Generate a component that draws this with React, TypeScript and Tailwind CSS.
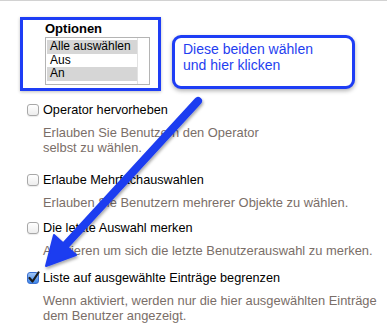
import React from "react";

const Check = ({ checked }: { checked?: boolean }) =>
  checked ? (
    <div className="relative w-[12px] h-[12px] shrink-0 rounded-[3px] border border-[#3b6fd0] bg-gradient-to-b from-[#9ec4f5] to-[#3d86e8]">
      <svg viewBox="0 0 13 13" className="absolute -left-px -top-[2px] w-[13px] h-[13px]">
        <path d="M2.5 7 L5.5 10.5 L11.5 1.5" fill="none" stroke="#1a1a1a" strokeWidth="2.2" strokeLinecap="round" strokeLinejoin="round" />
      </svg>
    </div>
  ) : (
    <div className="w-[12px] h-[12px] shrink-0 rounded-[3px] border border-[#a8a8a8] bg-gradient-to-b from-white to-[#ededed] shadow-[0_1px_1px_rgba(0,0,0,0.08)]" />
  );

const Row = ({ label, desc, checked, top }: { label: string; desc: string[]; checked?: boolean; top: string }) => (
  <div className={`flex flex-col ${top}`}>
    <div className="flex items-center gap-[4px] h-[16px]">
      <Check checked={checked} />
      <span className="text-[12.7px] text-black leading-[16px]">{label}</span>
    </div>
    <div className="pl-[16px] pt-[8px] text-[12.9px] leading-[14.5px] text-[#7a6e68]">
      {desc.map((d, i) => (
        <div key={i}>{d}</div>
      ))}
    </div>
  </div>
);

export default function App() {
  return (
    <div className="relative w-[387px] h-[323px] bg-white overflow-hidden" style={{ fontFamily: '"Liberation Sans", Arial, sans-serif' }}>
      <div className="h-[1px] bg-[#d2d2d2]" />
      <div className="flex items-start pt-[16px] pl-[20px] gap-[11px]">
        <div className="w-[141px] h-[74px] border-[3px] border-[#1e3df5] bg-white shadow-[0_1px_3px_rgba(0,0,0,0.25)] pl-[22px] pt-[0px]">
          <div className="text-[13px] font-bold leading-[17px] text-black">Optionen</div>
          <div className="mt-[0px] w-[105px] h-[48px] border border-[#b4b4b4] flex">
            <div className="flex-1 pl-[1px] pt-[2px] text-[12px] leading-[13.5px] text-black">
              <div className="bg-[#d6d6d6] pl-[3px] h-[13.5px]">Alle auswählen</div>
              <div className="pl-[3px] h-[13.5px]">Aus</div>
              <div className="bg-[#d6d6d6] pl-[3px] h-[13.5px]">An</div>
            </div>
            <div className="w-[12px] border-l border-[#e2e2e2]" />
          </div>
        </div>
        <div className="mt-[18px] w-[183px] h-[54px] rounded-[9px] border-[3px] border-[#1e3df5] bg-white shadow-[0_2px_4px_rgba(0,0,0,0.3)] pl-[8px] pt-[3px] text-[14px] leading-[16px] text-[#1f3ef0]">
          <div>Diese beiden wählen</div>
          <div>und hier klicken</div>
        </div>
      </div>
      <div className="flex flex-col pl-[27px] pt-[11px]">
        <Row top="mt-0" label="Operator hervorheben" desc={["Erlauben Sie Benutzern den Operator", "selbst zu wählen."]} />
        <Row top="mt-[17px]" label="Erlaube Mehrfachauswahlen" desc={["Erlauben Sie Benutzern mehrerer Objekte zu wählen."]} />
        <Row top="mt-[9.5px]" label="Die letzte Auswahl merken" desc={["Aktivieren um sich die letzte Benutzerauswahl zu merken."]} />
        <Row top="mt-[11.5px]" checked label="Liste auf ausgewählte Einträge begrenzen" desc={["Wenn aktiviert, werden nur die hier ausgewählten Einträge", "dem Benutzer angezeigt."]} />
      </div>
      <svg className="absolute left-0 top-0 pointer-events-none" width="387" height="323" viewBox="0 0 387 323">
        <defs>
          <filter id="sh" x="-20%" y="-20%" width="140%" height="140%">
            <feDropShadow dx="1" dy="2" stdDeviation="1.5" floodColor="#000" floodOpacity="0.35" />
          </filter>
        </defs>
        <g filter="url(#sh)">
          <line x1="198" y1="101" x2="62" y2="249" stroke="#1c3cf0" strokeWidth="8" strokeLinecap="round" />
          <polygon points="46,266 54,235 76,255" fill="#1c3cf0" stroke="#1c3cf0" strokeWidth="2" strokeLinejoin="round" />
        </g>
      </svg>
    </div>
  );
}
